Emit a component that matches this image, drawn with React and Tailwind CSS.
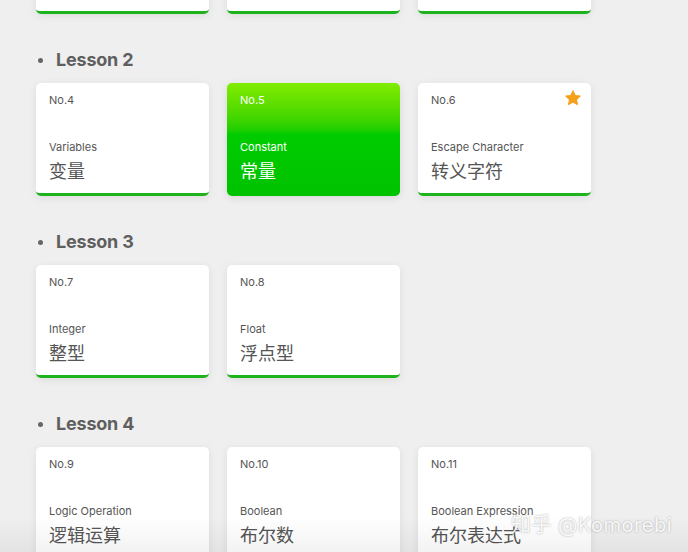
const lessons = [
  {
    title: "Lesson 1",
    items: [
      { no: 1, en: "Hello World", zh: "你好世界" },
      { no: 2, en: "Output", zh: "输出" },
      { no: 3, en: "Comment", zh: "注释" },
    ],
  },
  {
    title: "Lesson 2",
    items: [
      { no: 4, en: "Variables", zh: "变量" },
      { no: 5, en: "Constant", zh: "常量", active: true },
      { no: 6, en: "Escape Character", zh: "转义字符", star: true },
    ],
  },
  {
    title: "Lesson 3",
    items: [
      { no: 7, en: "Integer", zh: "整型" },
      { no: 8, en: "Float", zh: "浮点型" },
    ],
  },
  {
    title: "Lesson 4",
    items: [
      { no: 9, en: "Logic Operation", zh: "逻辑运算" },
      { no: 10, en: "Boolean", zh: "布尔数" },
      { no: 11, en: "Boolean Expression", zh: "布尔表达式" },
    ],
  },
];

function Star() {
  return (
    <svg viewBox="0 0 24 24" className="absolute right-[9px] top-[6px] h-[18px] w-[18px]">
      <path
        d="M12 2.5l2.9 6.1 6.6.8-4.9 4.6 1.3 6.6L12 17.3l-5.9 3.3 1.3-6.6-4.9-4.6 6.6-.8z"
        fill="#f5a01a"
        stroke="#f5a01a"
        strokeLinejoin="round"
        strokeWidth="1.5"
      />
    </svg>
  );
}

function Card({ item }) {
  if (item.active) {
    return (
      <div className="relative flex h-[113px] w-[173px] flex-col rounded-[5px] bg-gradient-to-b from-[#80ec00] via-[#00cc00] via-45% to-[#00c200] px-[13px] pt-[10px] pb-[12px] text-white shadow-[0_2px_8px_rgba(0,0,0,0.10)]">
        <p className="text-[11px] leading-[14px]">No.{item.no}</p>
        <p className="mt-auto text-[11px] leading-[14px]">{item.en}</p>
        <p className="mt-[6px] text-[18px] leading-[24px]">{item.zh}</p>
      </div>
    );
  }
  return (
    <div className="relative flex h-[113px] w-[173px] flex-col rounded-[5px] border-b-[3px] border-[#1db31d] bg-white px-[13px] pt-[10px] pb-[9px] text-[#555] shadow-[0_2px_8px_rgba(0,0,0,0.08)]">
      {item.star && <Star />}
      <p className="text-[11px] leading-[14px]">No.{item.no}</p>
      <p className="mt-auto text-[11px] leading-[14px]">{item.en}</p>
      <p className="mt-[6px] text-[18px] leading-[24px]">{item.zh}</p>
    </div>
  );
}

export default function App() {
  return (
    <div
      className="relative h-[552px] w-full overflow-hidden bg-[#efefef]"
      style={{ fontFamily: 'Inter, "Noto Sans CJK SC", sans-serif' }}
    >
      <div className="-mt-[134px] flex flex-col gap-[34px] pl-[36px]">
        {lessons.map((lesson) => (
          <section key={lesson.title} className="flex flex-col gap-[11px]">
            <h2 className="flex items-center gap-[13px] pl-[2px] text-[18px] font-bold leading-[24px] tracking-[-0.2px] text-[#5f5f5f]">
              <span className="h-[5px] w-[5px] rounded-full bg-[#666]" />
              {lesson.title}
            </h2>
            <div className="flex gap-[18px]">
              {lesson.items.map((item) => (
                <Card key={item.no} item={item} />
              ))}
            </div>
          </section>
        ))}
      </div>
      <div className="pointer-events-none absolute inset-x-0 bottom-0 h-[36px] bg-gradient-to-b from-transparent to-black/5" />
      <p className="pointer-events-none absolute bottom-[14px] right-[16px] text-[20px] leading-[26px] tracking-[0.5px] text-white/90 [text-shadow:0_0_2px_rgba(0,0,0,0.35)]">
        知乎 @Komorebi
      </p>
    </div>
  );
}
